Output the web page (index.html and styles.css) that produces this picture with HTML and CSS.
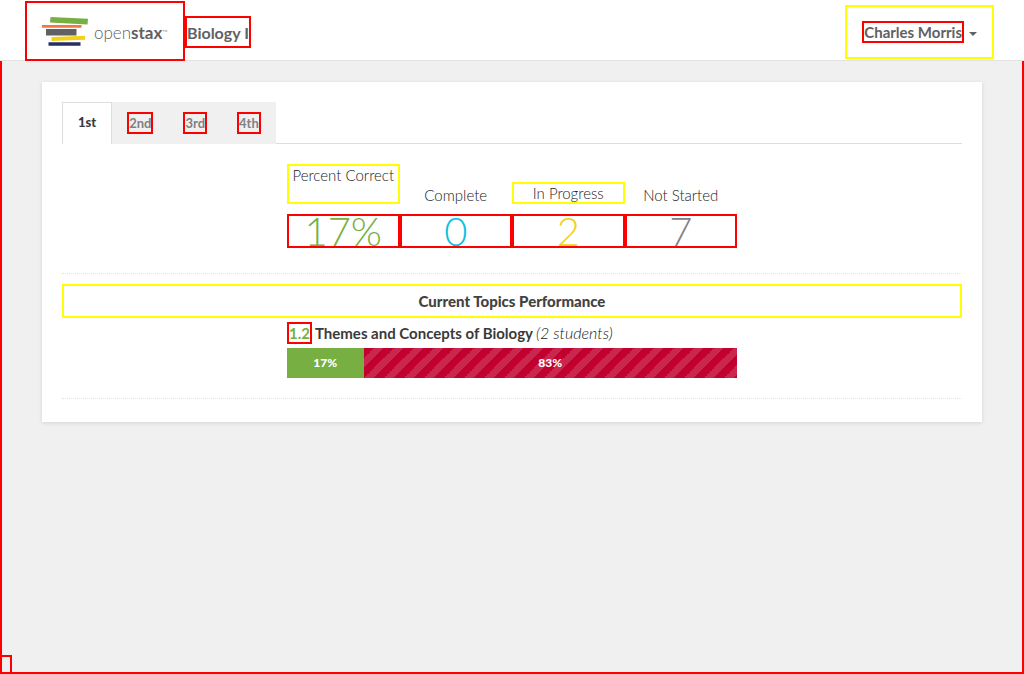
FILE: index.html
```html
<!DOCTYPE html>
<html lang="en">
<head>
<meta charset="utf-8">
<title>Biology I</title>
<link rel="stylesheet" href="styles.css">
</head>
<body>
<header class="navbar">
  <a class="brand outline-red" href="#" aria-label="openstax">
    <svg class="brand-mark" viewBox="0 0 46 30" aria-hidden="true">
      <path fill="#77af42" d="M8.500 0L46 1.700 45.500 7.500 8 5.500Z"/>
      <path fill="#f47641" d="M0 8H39.500V10.700H0Z"/>
      <path fill="#5f6163" d="M4 12H34.500V18.500H4Z"/>
      <path fill="#f4d019" d="M9.500 20L43 18.800V22.800L9.500 24Z"/>
      <path fill="#232f66" d="M6.500 25.200H38.500V28.800H6.500Z"/>
    </svg>
    <span class="brand-name">open<b>stax</b><small>™</small></span>
  </a>
  <a class="course outline-red" href="#">Biology I</a>
  <button class="user outline-yellow" type="button"><span class="user-name outline-red">Charles Morris</span><span class="caret"></span></button>
</header>
<main class="page outline-red">
  <section class="card">
    <nav class="tabs">
      <a class="tab tab-active" href="#">1st</a>
      <a class="tab" href="#"><span class="tab-label outline-red">2nd</span></a>
      <a class="tab" href="#"><span class="tab-label outline-red">3rd</span></a>
      <a class="tab" href="#"><span class="tab-label outline-red">4th</span></a>
    </nav>
    <div class="stats">
      <div class="stat-label stat-tall outline-yellow">Percent Correct</div>
      <div class="stat-label">Complete</div>
      <div class="stat-label outline-yellow">In Progress</div>
      <div class="stat-label">Not Started</div>
      <div class="stat-value outline-red green">17%</div>
      <div class="stat-value outline-red blue">0</div>
      <div class="stat-value outline-red gold">2</div>
      <div class="stat-value outline-red gray">7</div>
    </div>
    <div class="topics">
      <h2 class="topics-title outline-yellow">Current Topics Performance</h2>
      <div class="topic">
        <div class="topic-name"><span class="section outline-red">1.2</span><b>Themes and Concepts of Biology</b><em>(2 students)</em></div>
        <div class="progress">
          <div class="correct" style="width:17%">17%</div>
          <div class="incorrect" style="width:83%">83%</div>
        </div>
      </div>
    </div>
  </section>
  <span class="corner outline-red"></span>
</main>
</body>
</html>
```
FILE: styles.css
```css
* { box-sizing: border-box; }

body {
  display: flex;
  flex-direction: column;
  min-height: 100vh;
  margin: 0;
  background: #f0f0f0;
  color: #222;
  font: 300 15px/22px Lato, sans-serif;
}

a { color: inherit; text-decoration: none; }
.outline-red { border: 2px solid #f00; }
.outline-yellow { border: 2px solid #ff0; }

.navbar {
  display: flex;
  align-items: flex-start;
  padding: 1px 30px 0 25px;
  background: #fff;
  border-bottom: 1px solid #e2e2e2;
  color: #5f6163;
  font-weight: 400;
}
.brand {
  display: flex;
  align-items: center;
  gap: 6px;
  width: 160px;
  height: 60px;
  margin-bottom: -1px;
  padding: 2px 0 0 15px;
  color: #5f6163;
}
.brand-mark { width: 46px; height: 30px; }
.brand-name { font-size: 17px; font-weight: 300; }
.brand-name b { font-weight: 700; }
.brand-name small { font-size: 7px; vertical-align: 4px; }
.course { margin-top: 15px; height: 32px; font-size: 16px; line-height: 30px; font-weight: 700; }
.user {
  display: flex;
  align-items: center;
  gap: 5px;
  height: 54px;
  margin: 4px 0 0 auto;
  padding: 0 15px;
  background: none;
  color: inherit;
  font: inherit;
  font-weight: 700;
}
.user-name { height: 22px; line-height: 18px; }
.caret { border: 4px solid transparent; border-top-color: currentColor; border-bottom: 0; margin-top: 4px; }

.page { position: relative; flex: 1; padding: 21px 40px; border-top: 0; }
.corner { position: absolute; left: -2px; bottom: -2px; width: 12px; height: 19px; }
.card { padding: 20px 20px 23px; background: #fff; box-shadow: 0 1px 4px rgba(0, 0, 0, .12); }

.tabs { display: flex; height: 42px; border-bottom: 1px solid #ddd; }
.tab {
  height: 42px;
  padding: 10px 15px;
  background: #f0f0f0;
  color: #818181;
  font-size: 13px;
  font-weight: 700;
}
.tab-active { padding: 8px 15px; background: #fff; border: 1px solid #ddd; border-bottom: 0; color: #3a3a3a; font-weight: 900; }
.tab-label { display: block; height: 22px; line-height: 18px; }

.stats {
  display: grid;
  grid-template-columns: repeat(4, 1fr);
  align-items: end;
  row-gap: 10px;
  width: 50%;
  margin: 20px auto 25px;
  text-align: center;
}
.stat-label { height: 22px; line-height: 18px; }
.stat-label:not(.outline-yellow) { line-height: 26px; }
.stat-tall { height: 40px; }
.stat-value { height: 34px; font-size: 40px; line-height: 30px; }
.green { color: #77af42; }
.blue { color: #0dc0dc; }
.gold { color: #f4d019; }
.gray { color: #818181; }

.topics { padding: 10px 0 20px; border: dotted #e2e2e2; border-width: 1px 0; }
.topics-title { height: 34px; margin: 0 0 4px; color: #424242; font-size: 15px; font-weight: 900; line-height: 30px; text-align: center; }
.topic { width: 50%; margin: 0 auto; }
.topic-name { display: flex; gap: 3px; height: 22px; margin-bottom: 4px; white-space: nowrap; }
.topic-name b { color: #3a3a3a; font-weight: 700; }
.topic-name em { font-size: 16px; }
.section { color: #77af42; font-weight: 700; line-height: 18px; }
.progress { display: flex; height: 30px; color: #fff; font-size: 12px; font-weight: 900; line-height: 30px; text-align: center; }
.correct { background: #77af42; }
.incorrect {
  background: #c2002f linear-gradient(-45deg, rgba(255, 255, 255, .15) 25%, transparent 25%, transparent 50%, rgba(255, 255, 255, .15) 50%, rgba(255, 255, 255, .15) 75%, transparent 75%) 0 0 / 20px 20px;
}
```
